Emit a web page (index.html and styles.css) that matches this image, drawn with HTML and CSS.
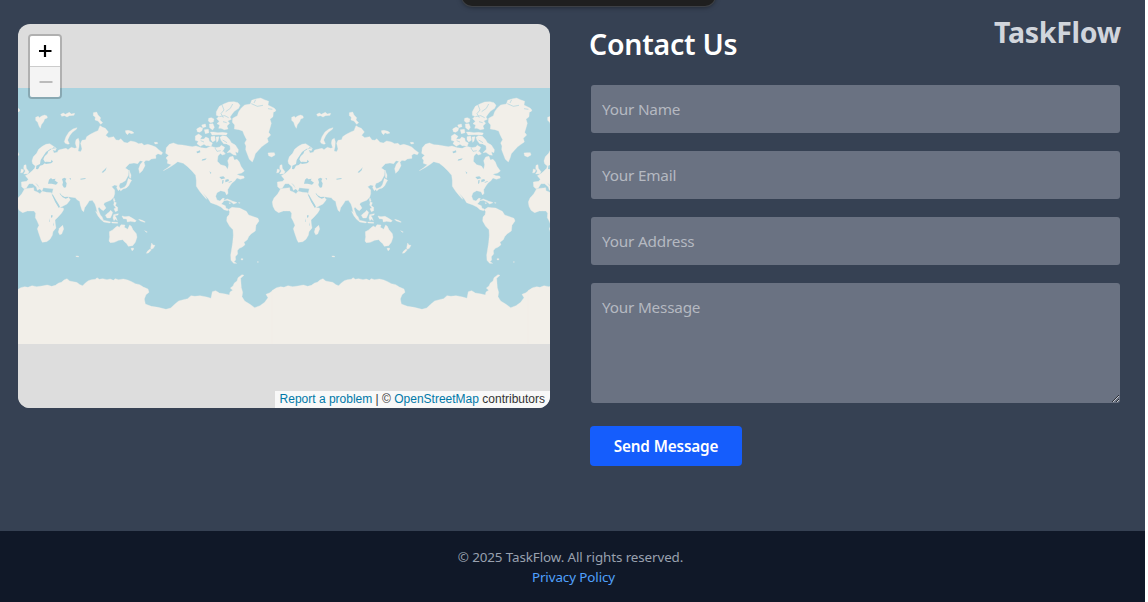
FILE: index.html
```html
<!DOCTYPE html>
<html lang="en">
<head>
<meta charset="utf-8">
<title>TaskFlow</title>
<link rel="stylesheet" href="styles.css">
</head>
<body>
<div class="page">
  <div class="notch"></div>
  <div class="brand">TaskFlow</div>
  <main class="contact">
    <section class="map">
      <svg class="world" viewBox="0 0 532 384" width="532" height="384" aria-hidden="true">
        <defs>
          <g id="tile">
            <g class="land">
              <!-- Eurasia -->
              <path d="M11 305L10 291L26 289L31 283L22 272L34 265L42 258L50 250L52 243L44 236L42 228L46 215L56 205L62 193L73 184L84 178L95 176L104 182L115 190L112 197L104 194L108 204L118 202L122 195L134 192L144 190L150 194L160 187L170 190L176 188L172 175L174 164L181 160L184 170L183 186L180 198L188 200L192 192L188 175L192 166L203 164L206 155L217 148L232 140L240 137L246 122L254 127L262 130L271 141L263 151L272 158L287 155L294 165L303 166L308 161L318 172L328 174L338 168L352 171L362 176L372 175L378 181L389 178L400 181L413 186L422 194L434 203L430 209L420 206L413 211L414 220L400 222L393 227L384 226L378 232L381 242L373 257L365 265L362 251L367 238L375 229L366 227L359 236L348 234L334 236L322 249L332 256L331 271L322 287L312 293L306 295L303 303L307 312L301 317L296 308L298 302L290 300L281 305L290 315L290 326L287 337L278 346L267 350L260 353L257 358L264 369L256 377L249 373L243 366L240 371L247 391L242 389L237 379L234 366L231 357L223 346L214 347L208 357L200 368L197 380L192 376L187 360L185 349L178 345L172 338L150 335L157 344L147 357L124 369L118 358L108 339L102 327L106 311L92 310L76 308L72 318L66 312L60 300L51 293L66 311L58 316L55 306L44 296L33 296L25 309L18 311Z"/>
              <!-- Africa -->
              <path d="M20 311L40 309L47 308L48 317L58 321L66 326L72 319L86 322L100 323L106 337L113 351L123 368L136 369L137 374L131 384L121 395L111 405L112 417L114 429L105 440L103 451L96 463L86 470L73 472L69 464L62 444L58 431L63 421L57 407L52 398L53 385L48 378L38 378L28 378L14 383L3 376L-3 364L-5 351L0 339L11 327Z"/>
              <path d="M134 421L137 432L131 447L125 449L121 441L124 430Z"/>
              <!-- British Isles, Iceland, Arctic islands -->
              <path d="M18 241L24 239L25 250L33 260L30 266L17 267L22 258L17 250ZM10 252L17 254L15 262L8 264ZM-18 204L-10 203L1 203L3 210L-7 216L-16 212Z"/>
              <path d="M177 128L165 132L153 141L144 155L139 170L142 175L150 178L154 176L149 165L155 152L163 142L175 133Z"/>
              <path d="M53 97L61 94L64 98L71 93L80 90L87 93L88 99L80 102L77 110L70 119L67 130L63 123L59 112L53 106ZM128 88L136 84L142 88L154 82L160 87L170 85L168 91L154 92L147 96L140 92L131 94ZM226 83L236 81L240 90L248 98L246 105L254 113L248 118L240 108L231 105L232 96L226 92ZM322 137L330 136L342 139L348 144L340 146L333 143L329 149L324 145ZM-3 70L3 73L4 79L-5 81ZM409 172L418 172L419 176L411 177Z"/>
              <!-- Japan and the Pacific rim -->
              <path d="M333 255L339 270L338 280L334 277L334 263ZM331 280L341 286L336 294L332 302L325 309L315 312L308 318L306 312L319 307L325 300L328 291ZM288 339L291 347L288 350L286 344ZM289 350L295 353L292 362L299 367L299 377L292 380L288 371L294 369L287 360Z"/>
              <path d="M233 379L241 384L252 395L256 405L249 404L240 393ZM251 405L267 408L278 411L275 414L257 411ZM281 411L299 412L299 415L282 414ZM278 376L284 382L281 391L277 399L267 399L262 391L267 386L273 382ZM287 389L301 386L300 390L290 392L294 397L298 407L292 402L288 407L285 399ZM312 393L321 395L333 394L344 400L355 407L351 411L338 409L328 411L326 402L316 401ZM362 403L373 406L382 411L379 412L366 407ZM380 437L388 441L385 442Z"/>
              <!-- Australia and New Zealand -->
              <path d="M274 440L284 435L290 429L298 423L304 427L309 419L321 420L319 427L329 433L335 420L340 424L345 434L355 446L357 457L352 472L344 482L331 484L325 475L320 471L314 464L302 466L289 472L277 473L273 468L275 456ZM339 490L347 489L346 495L342 497ZM401 474L405 480L411 481L406 490L400 493L398 488ZM397 491L399 496L391 504L385 505L388 499ZM173 513L181 513L182 516L175 515Z"/>
              <!-- North America -->
              <path d="M445 188L454 178L466 174L480 179L493 180L510 183L523 185L534 183L550 188L565 190L578 184L593 188L605 186L610 181L620 187L617 194L609 203L600 213L598 229L608 239L622 243L629 253L632 239L629 227L635 216L645 214L649 225L657 223L664 231L669 244L679 258L671 264L656 268L666 272L677 273L679 279L667 283L657 279L650 288L642 294L635 304L629 314L630 325L626 330L621 320L608 317L597 323L593 334L597 345L606 348L614 340L619 340L616 350L610 357L622 362L624 370L631 372L629 377L618 374L609 366L597 360L578 353L571 342L557 326L553 322L564 337L566 343L556 332L545 319L535 304L535 286L533 271L522 258L509 245L496 235L479 230L470 237L455 247L436 257L448 249L460 239L448 235L449 226L444 219L452 211L443 205Z"/>
              <path d="M532 153L542 147L552 154L546 163L558 162L563 156L572 160L574 169L583 174L580 183L566 183L558 178L547 184L537 176L541 169L532 166ZM536 132L546 126L554 130L552 137L545 142L538 140ZM551 120L562 117L564 125L554 128ZM572 100L580 98L588 102L586 111L577 113L571 108ZM574 117L585 116L589 127L584 135L575 128ZM559 134L571 133L573 143L562 146ZM577 141L587 141L600 143L613 142L628 144L625 150L602 149L582 150ZM579 155L590 153L592 166L584 171L579 164ZM594 156L603 155L600 168L596 172ZM606 157L613 152L625 154L635 164L640 173L652 180L661 194L660 203L652 200L655 211L646 209L636 202L627 203L637 193L636 182L626 177L617 176L609 166ZM607 198L617 200L622 207L613 210L607 205Z"/>
              <path d="M595 80L604 64L617 57L632 51L648 50L660 53L666 61L662 70L649 79L643 86L636 96L640 103L629 108L635 115L627 123L630 132L619 134L609 130L602 130L605 120L597 116L604 109L596 101L603 94L595 91Z"/>
              <!-- Greenland -->
              <path d="M644 100L658 92L662 80L670 69L680 60L697 57L701 46L713 42L728 39L739 44L752 49L750 60L768 69L774 76L766 82L765 95L756 103L760 115L756 129L752 142L758 150L748 160L751 171L741 178L731 185L722 195L712 206L708 220L703 231L694 223L689 210L683 194L684 183L680 174L686 164L679 151L674 138L663 134L649 132L650 120L643 112Z"/>
              <path d="M616 347L628 342L641 347L648 351L638 350L628 346ZM640 352L650 350L657 353L647 357ZM633 353L638 354L635 356ZM661 353L666 353L665 355Z"/>
              <!-- South America -->
              <path d="M631 374L642 367L653 368L665 369L677 375L685 379L692 390L707 395L720 400L723 408L714 421L712 438L699 447L692 455L688 464L678 472L681 479L673 486L664 490L658 497L659 507L652 515L653 525L648 530L656 535L647 535L639 526L638 510L641 492L644 473L646 451L645 434L635 424L626 408L627 396L633 389L635 380ZM669 521L675 521L674 525L670 525ZM717 531L721 530L721 532Z"/>
              <!-- Antarctica -->
              <path d="M-6 617L8 608L20 605L30 607L42 602L56 605L72 603L88 600L101 604L112 601L122 594L130 592L138 585L147 581L155 588L166 590L176 592L186 599L194 602L202 594L211 587L220 584L232 583L237 578L244 583L254 581L267 584L277 582L286 586L292 581L302 584L316 582L329 585L341 590L352 596L365 599L376 606L390 612L393 622L384 629L379 642L382 657L400 664L420 667L444 673L458 669L472 656L482 648L496 644L509 641L519 632L531 634L546 632L566 636L579 640L583 620L593 617L604 624L622 627L634 630L636 621L644 616L637 609L645 603L649 594L657 588L660 578L672 569L678 571L668 580L669 594L670 608L674 622L672 635L680 648L696 658L710 668L726 662L740 652L750 638L744 628L754 624L766 616L776 610L776 780L-6 780Z"/>
            </g>
            <g class="sea">
              <path d="M115 190L107 187L100 193L91 199L88 206L80 214L76 223L82 233L74 240L66 242L60 253L54 252L55 242L66 237L68 225L76 213L84 201L98 191ZM78 233L84 230L98 231L101 224L105 230L99 235L84 237Z"/>
              <path d="M90 296L93 284L99 279L103 283L113 281L110 286L120 293L114 299L101 296ZM132 282L139 278L145 281L142 288L146 295L144 307L138 308L133 300L135 292Z"/>
              <path d="M101 328L105 329L114 345L123 359L126 366L122 368L112 352ZM125 323L131 331L140 336L149 335L151 338L143 341L134 337L126 328Z"/>
              <path d="M251 262L262 251L266 247L263 256L255 263ZM187 281L203 279L202 282L188 284ZM99 391L104 391L103 397L99 398ZM93 400L95 409L93 412ZM106 412L108 421L106 422ZM154 280L159 280L158 285Z"/>
              <path d="M535 200L546 196L547 202L538 205ZM553 223L566 220L562 225L551 227ZM574 259L580 263L578 267ZM604 276L616 274L622 280L610 283ZM613 286L617 285L616 294L612 297ZM622 284L631 282L633 288L622 292ZM632 291L642 288L640 291L632 293Z"/>
            </g>
            <path class="channel" d="M611 57L618 75L609 86L616 98M644 57L637 70L623 80M604 95L620 92L632 98M615 110L626 113M700 56L718 64L735 61M713 44L708 54M764 73L750 71M548 167L558 171M560 186L571 183M614 165L627 173M591 189L597 199L608 197M590 178L602 177"/>
          </g>
        </defs>
        <rect class="water" x="0" y="64" width="532" height="256"/>
        <g transform="translate(0 61) scale(.333333)">
          <use href="#tile" x="-768"/>
          <use href="#tile"/>
          <use href="#tile" x="768"/>
          <use href="#tile" x="1536"/>
        </g>
        <rect class="blank" x="0" y="320" width="532" height="64"/>
      </svg>
      <div class="zoom">
        <div class="zoom-in"><svg width="30" height="30"><path d="M9 15h12.500M15 9v12" stroke="#000" stroke-width="2.200"/></svg></div>
        <div class="zoom-out"><svg width="30" height="30"><path d="M9.500 15h13" stroke="#bbb" stroke-width="2"/></svg></div>
      </div>
      <div class="credit"><a>Report a problem</a> | © <a>OpenStreetMap</a> contributors</div>
    </section>
    <form class="form">
      <h2>Contact Us</h2>
      <input class="field" placeholder="Your Name">
      <input class="field" placeholder="Your Email">
      <input class="field" placeholder="Your Address">
      <textarea class="field message" placeholder="Your Message"></textarea>
      <button type="button" class="send">Send Message</button>
    </form>
  </main>
  <footer class="footer">
    <div class="rights">© 2025 TaskFlow. All rights reserved.</div>
    <a class="privacy">Privacy Policy</a>
  </footer>
</div>
</body>
</html>
```
FILE: styles.css
```css
* { box-sizing: border-box; }
body { margin: 0; background: #fff; font-family: "Noto Sans", "Open Sans", sans-serif; font-size: 16px; overflow: hidden; }
.page { position: relative; width: 1145px; height: 602px; background: #364153; display: flex; flex-direction: column; }
.notch { position: absolute; left: 462px; top: -14px; width: 253px; height: 20px; background: #1f1f1f; border-radius: 0 0 10px 10px; box-shadow: 0 0 0 1px #3d4045, 0 1px 5px rgba(0,0,0,.5); }
.brand { position: absolute; right: 24px; top: 12px; color: #d1d5dc; font-size: 28.500px; line-height: 40px; font-weight: 700; letter-spacing: -.250px; white-space: nowrap; }
.contact { display: flex; gap: 40px; height: 531px; padding: 24px 25px 0 18px; }
.map { position: relative; width: 532px; height: 384px; flex: none; border-radius: 12px; overflow: hidden; background: #ddd; }
.world { display: block; }
.water, .sea { fill: #aad3df; }
.land { fill: #f2efe9; stroke: #f2efe9; stroke-width: 1; }
.channel { fill: none; stroke: #aad3df; stroke-width: 2; }
.blank { fill: #ddd; }
.zoom { position: absolute; left: 10px; top: 10px; width: 34px; border: 2px solid rgba(0,0,0,.2); border-radius: 4px; background-clip: padding-box; }
.zoom svg { display: block; fill: none; }
.zoom-in { height: 31px; background: #fff; border-bottom: 1px solid #ccc; border-radius: 2px 2px 0 0; }
.zoom-out { height: 30px; background: #f4f4f4; border-radius: 0 0 2px 2px; }
.credit { position: absolute; right: 0; bottom: 0; height: 17px; padding: 0 5px; background: rgba(255,255,255,.8); color: #333; font: 12px/16.800px "Liberation Sans", Arial, sans-serif; white-space: nowrap; }
.credit a { color: #0078a8; }
.form { flex: 1; display: flex; flex-direction: column; align-items: flex-start; }
h2 { margin: 0 0 21px -1px; color: #fff; font-size: 28.500px; line-height: 40px; font-weight: 600; letter-spacing: -.250px; white-space: nowrap; }
.field { width: 529px; height: 48px; margin: 0 0 18px 1px; padding: 12px 11px; border: 0; border-radius: 3px; background: #6a7282; color: #fff; font: 15.300px/24px "Noto Sans", "Open Sans", sans-serif; letter-spacing: -.200px; }
.field::placeholder { color: #b5b9c1; opacity: 1; }
.message { height: 120px; margin-bottom: 23px; resize: vertical; }
.send { width: 152px; height: 40px; padding: 0; border: 0; border-radius: 4px; background: #155dfc; color: #fff; font: 600 15.300px/24px "Noto Sans", "Open Sans", sans-serif; letter-spacing: -.150px; white-space: nowrap; }
.footer { height: 71px; padding: 16px 4px 0 0; background: #101828; color: #99a1af; text-align: center; font-size: 13.400px; line-height: 20px; letter-spacing: -.100px; }
.privacy { display: block; padding-left: 6px; color: #51a2ff; }
```
